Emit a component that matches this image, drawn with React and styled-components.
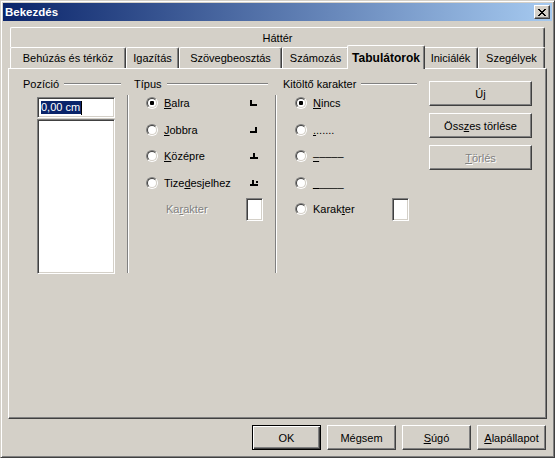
import React from 'react';
import styled, { createGlobalStyle, css } from 'styled-components';

const GlobalStyle = createGlobalStyle`
    html, body {
        margin: 0;
        padding: 0;
        background: #d4d0c8;
    }
    body {
        font-family: "Liberation Sans", Arial, sans-serif;
        font-size: 11px;
        color: #000;
    }
`;

const raised = css`
    border: 1px solid;
    border-color: #fff #404040 #404040 #fff;
    box-shadow: inset -1px -1px 0 #808080;
`;

const sunken = css`
    border: 1px solid;
    border-color: #808080 #fff #fff #808080;
    box-shadow: inset 1px 1px 0 #404040, inset -1px -1px 0 #d4d0c8;
    background: #fff;
`;

const Window = styled.div`
    width: 555px;
    height: 458px;
    box-sizing: border-box;
    background: #d4d0c8;
    border: 1px solid;
    border-color: #d4d0c8 #404040 #404040 #d4d0c8;
    box-shadow: inset 1px 1px 0 #fff, inset -1px -1px 0 #808080;
    padding: 2px;
    display: flex;
    flex-direction: column;
`;

const TitleBar = styled.div`
    height: 18px;
    flex: none;
    display: flex;
    align-items: center;
    justify-content: space-between;
    padding: 0 2px 0 2px;
    background: linear-gradient(to right, #0a246a, #a6caf0);
    color: #fff;
    font-weight: bold;
    font-size: 11.5px;
`;

const CloseButton = styled.div`
    box-sizing: border-box;
    width: 16px;
    height: 14px;
    background: #d4d0c8;
    ${raised};
    display: flex;
    align-items: center;
    justify-content: center;
`;

const Body = styled.div`
    flex: 1;
    display: flex;
    flex-direction: column;
    padding: 6px 5px 5px 5px;
`;

const TabStrip = styled.div`
    margin: 0 2px;
    display: flex;
    flex-direction: column;
`;

const TabRow = styled.div`
    display: flex;
    height: ${p => p.$height}px;
`;

const Tab = styled.div`
    box-sizing: border-box;
    flex: none;
    width: ${p => p.$width}px;
    height: 100%;
    display: flex;
    align-items: center;
    justify-content: center;
    background: #d4d0c8;
    border-top: 1px solid #fff;
    border-left: 1px solid #fff;
    border-right: 1px solid #404040;
    border-radius: 2px 2px 0 0;
    box-shadow: inset -1px 0 0 #808080;
    white-space: nowrap;

    ${p => p.$active && css`
        position: relative;
        z-index: 1;
        width: ${p.$width + 4}px;
        height: calc(100% + 3px);
        margin: -2px -2px -1px -2px;
        font-weight: bold;
        font-size: 12px;
    `}
`;

const Panel = styled.div`
    box-sizing: border-box;
    height: 351px;
    border: 1px solid;
    border-color: #fff #404040 #404040 #fff;
    box-shadow: inset -1px -1px 0 #808080;
    padding: 8px 0 0 14px;
    display: flex;
    align-items: flex-start;
`;

const Group = styled.div`
    flex: none;
    width: ${p => p.$width}px;
    margin-left: ${p => p.$offset || 0}px;
`;

const GroupHeader = styled.div`
    height: 14px;
    display: flex;
    align-items: center;
    gap: 5px;
    padding-left: ${p => p.$indent || 0}px;
`;

const HeaderLine = styled.div`
    flex: 1;
    height: 0;
    border-top: 1px solid #808080;
    border-bottom: 1px solid #fff;
`;

const GroupBody = styled.div`
    box-sizing: border-box;
    height: 178px;
    margin-top: 4px;
    padding-left: ${p => p.$indent}px;
    display: flex;
    flex-direction: column;
    gap: 10.5px;
    ${p => p.$groove && css`
        border-left: 1px solid #808080;
        box-shadow: inset 1px 0 0 #fff;
    `}
`;

const PositionBody = styled.div`
    margin-top: 6px;
    padding-left: 14px;
    display: flex;
    flex-direction: column;
    gap: 1px;
`;

const PositionInput = styled.div`
    box-sizing: border-box;
    width: 78px;
    height: 21px;
    ${sunken};
    padding-left: 3px;
    display: flex;
    align-items: center;
`;

const Selection = styled.span`
    background: #0a246a;
    color: #fff;
    line-height: 13px;
    padding-right: 1px;
`;

const Caret = styled.span`
    width: 1px;
    height: 14px;
    background: #000;
`;

const PositionList = styled.div`
    box-sizing: border-box;
    width: 78px;
    height: 155px;
    ${sunken};
`;

const Row = styled.div`
    height: 16px;
    display: flex;
    align-items: center;
    padding-left: ${p => p.$indent || 0}px;
`;

const RadioDot = styled.span`
    position: relative;
    flex: none;
    box-sizing: border-box;
    width: 12px;
    height: 12px;
    border-radius: 50%;
    border: 1px solid;
    border-color: #808080 #fff #fff #808080;

    &::before {
        content: '';
        position: absolute;
        inset: 0;
        border-radius: 50%;
        border: 1px solid;
        border-color: #404040 #d4d0c8 #d4d0c8 #404040;
        background: #fff;
    }

    ${p => p.$checked && css`
        &::after {
            content: '';
            position: absolute;
            left: 3px;
            top: 3px;
            width: 4px;
            height: 4px;
            border-radius: 1px;
            background: #000;
        }
    `}
`;

const Label = styled.span`
    margin-left: ${p => p.$gap ?? 6}px;
    white-space: nowrap;
    ${p => p.$disabled && css`
        color: #808080;
        text-shadow: 1px 1px 0 #fff;
    `}
`;

const Key = styled.span`
    text-decoration: underline;
`;

const TabIcon = styled.svg`
    margin-left: auto;
    margin-right: 10px;
    flex: none;
`;

const CharBox = styled.div`
    box-sizing: border-box;
    flex: none;
    width: 17px;
    height: 23px;
    margin-left: auto;
    margin-right: ${p => p.$right}px;
    ${sunken};
`;

const ButtonColumn = styled.div`
    flex: none;
    margin-left: 12px;
    margin-top: 4px;
    display: flex;
    flex-direction: column;
    gap: 7px;
`;

const Button = styled.button`
    box-sizing: border-box;
    width: ${p => p.$width}px;
    height: 25px;
    padding: 0;
    background: #d4d0c8;
    font-family: "Liberation Sans", Arial, sans-serif;
    font-size: 11px;
    color: #000;
    ${raised};

    ${p => p.$default && css`
        border-color: #000;
        box-shadow: inset 1px 1px 0 #fff, inset -1px -1px 0 #404040, inset -2px -2px 0 #808080;
    `}

    ${p => p.disabled && css`
        color: #808080;
        text-shadow: 1px 1px 0 #fff;
    `}
`;

const ButtonRow = styled.div`
    margin-top: 6px;
    padding-right: 1px;
    display: flex;
    justify-content: flex-end;
    gap: 6px;
`;

const closePixels = [
    'XX....XX',
    '.XX..XX.',
    '..XXXX..',
    '...XX...',
    '..XXXX..',
    '.XX..XX.',
    'XX....XX',
];

const CloseGlyph = () => (
    <svg width="8" height="7" viewBox="0 0 8 7" shapeRendering="crispEdges">
        {closePixels.map((line, y) =>
            line.split('').map((c, x) =>
                c === 'X' ? <rect key={`${x}-${y}`} x={x} y={y} width="1" height="1" fill="#000" /> : null
            )
        )}
    </svg>
);

const tabShapes = {
    left: [[0, 0, 2, 6], [0, 4, 7, 2]],
    right: [[5, 0, 2, 6], [0, 4, 7, 2]],
    center: [[3, 0, 2, 6], [0, 4, 8, 2]],
    decimal: [[2, 0, 2, 6], [0, 4, 8, 2], [6, 1, 2, 2]],
};

const TabStopIcon = ({ kind }) => (
    <TabIcon width="8" height="6" viewBox="0 0 8 6" shapeRendering="crispEdges">
        {tabShapes[kind].map(([x, y, w, h], i) => (
            <rect key={i} x={x} y={y} width={w} height={h} fill="#000" />
        ))}
    </TabIcon>
);

const tabs = [
    { label: 'Behúzás és térköz', width: 116 },
    { label: 'Igazítás', width: 53 },
    { label: 'Szövegbeosztás', width: 103 },
    { label: 'Számozás', width: 67 },
    { label: 'Tabulátorok', width: 74, active: true },
    { label: 'Iniciálék', width: 55 },
    { label: 'Szegélyek', width: 67 },
];

const typeOptions = [
    { kind: 'left', checked: true, label: <><Key>B</Key>alra</> },
    { kind: 'right', label: <><Key>J</Key>obbra</> },
    { kind: 'center', label: <><Key>K</Key>özépre</> },
    { kind: 'decimal', label: <>Tize<Key>d</Key>esjelhez</> },
];

const fillOptions = [
    { checked: true, label: <><Key>N</Key>incs</> },
    { label: <><Key>.</Key>......</> },
    { label: <><Key>–</Key>––––</> },
    { label: <><Key>_</Key>____</> },
];

export default function App() {
    return (
        <>
            <GlobalStyle />
            <Window>
                <TitleBar>
                    <span>Bekezdés</span>
                    <CloseButton><CloseGlyph /></CloseButton>
                </TitleBar>

                <Body>
                    <TabStrip>
                        <TabRow $height={20}>
                            <Tab $width={535}>Háttér</Tab>
                        </TabRow>
                        <TabRow $height={21}>
                            {tabs.map(t => (
                                <Tab key={t.label} $width={t.width} $active={t.active}>{t.label}</Tab>
                            ))}
                        </TabRow>
                    </TabStrip>

                    <Panel>
                        <Group $width={98}>
                            <GroupHeader>
                                <span>Pozíció</span>
                                <HeaderLine />
                            </GroupHeader>
                            <PositionBody>
                                <PositionInput>
                                    <Selection>0,00 cm</Selection>
                                    <Caret />
                                </PositionInput>
                                <PositionList />
                            </PositionBody>
                        </Group>

                        <Group $width={141} $offset={6}>
                            <GroupHeader $indent={7}>
                                <span>Típus</span>
                                <HeaderLine />
                            </GroupHeader>
                            <GroupBody $groove $indent={18}>
                                {typeOptions.map(o => (
                                    <Row key={o.kind}>
                                        <RadioDot $checked={o.checked} />
                                        <Label>{o.label}</Label>
                                        <TabStopIcon kind={o.kind} />
                                    </Row>
                                ))}
                                <Row>
                                    <Label $disabled $gap={20}>Ka<Key>r</Key>akter</Label>
                                    <CharBox $right={5} />
                                </Row>
                            </GroupBody>
                        </Group>

                        <Group $width={142} $offset={7}>
                            <GroupHeader $indent={8}>
                                <span>Kitöltő karakter</span>
                                <HeaderLine />
                            </GroupHeader>
                            <GroupBody $groove $indent={19}>
                                {fillOptions.map((o, i) => (
                                    <Row key={i}>
                                        <RadioDot $checked={o.checked} />
                                        <Label>{o.label}</Label>
                                    </Row>
                                ))}
                                <Row>
                                    <RadioDot />
                                    <Label>Karak<Key>t</Key>er</Label>
                                    <CharBox $right={8} />
                                </Row>
                            </GroupBody>
                        </Group>

                        <ButtonColumn>
                            <Button $width={103}>Ú<Key>j</Key></Button>
                            <Button $width={103}>Öss<Key>z</Key>es törlése</Button>
                            <Button $width={103} disabled><Key>T</Key>örlés</Button>
                        </ButtonColumn>
                    </Panel>

                    <ButtonRow>
                        <Button $width={69} $default>OK</Button>
                        <Button $width={69}>Mégsem</Button>
                        <Button $width={69}><Key>S</Key>úgó</Button>
                        <Button $width={69}><Key>A</Key>lapállapot</Button>
                    </ButtonRow>
                </Body>
            </Window>
        </>
    );
}
